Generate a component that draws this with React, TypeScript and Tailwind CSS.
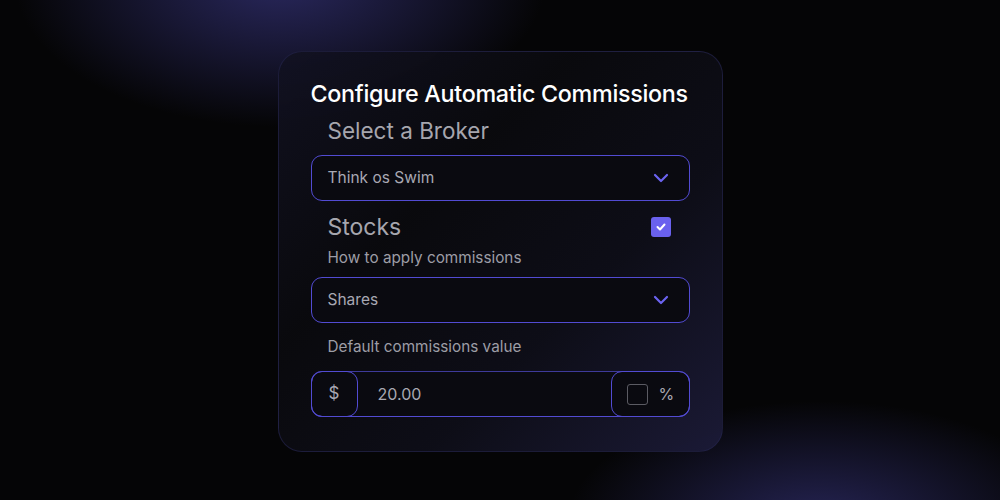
import { useState } from 'react'

function Chevron() {
  return (
    <svg width="16" height="10" viewBox="0 0 16 10" fill="none" className="text-[#6b63f0]">
      <path d="M2 2l6 6 6-6" stroke="currentColor" strokeWidth="2.2" strokeLinecap="round" strokeLinejoin="round" />
    </svg>
  )
}

function SelectBox({ value }: { value: string }) {
  return (
    <div className="flex h-[46px] items-center justify-between rounded-[11px] border border-[#524bd2] bg-[#0a0a10] pl-[16px] pr-[20px]">
      <span className="text-[15.5px] text-[#a8a8b3]">{value}</span>
      <Chevron />
    </div>
  )
}

export default function App() {
  const [stocks, setStocks] = useState(true)
  const [percent, setPercent] = useState(false)

  return (
    <div
      className="flex h-[500px] w-[1000px] items-start justify-center overflow-hidden bg-[#050506] pt-[51px]"
      style={{
        fontFamily: 'Inter, "Noto Sans", sans-serif',
        backgroundImage:
          'radial-gradient(ellipse 380px 210px at 280px -20px, rgba(50,48,115,0.8), transparent 70%), radial-gradient(ellipse 360px 170px at 820px 520px, rgba(50,48,115,0.7), transparent 70%)',
      }}
    >
      <div
        className="flex h-[401px] w-[445px] flex-col rounded-[24px] border border-[#24234a]/70 px-[32px] pt-[26px]"
        style={{
          backgroundImage:
            'linear-gradient(135deg, rgba(18,18,34,0.9) 0%, rgba(10,10,14,0.95) 35%, rgba(14,14,24,0.95) 65%, rgba(28,27,56,0.95) 100%)',
        }}
      >
        <h1 className="whitespace-nowrap text-[23.3px] font-medium leading-[32px] tracking-[-0.3px] text-white">
          Configure Automatic Commissions
        </h1>
        <div className="mt-[7px] pl-[17px] text-[22.5px] leading-[28px] text-[#a6a6ae]">Select a Broker</div>

        <div className="mt-[10px]">
          <SelectBox value="Think os Swim" />
        </div>

        <div className="mt-[12px] flex items-center justify-between pl-[17px] pr-[19px]">
          <span className="text-[23px] leading-[28px] text-[#a6a6ae]">Stocks</span>
          <button
            onClick={() => setStocks(!stocks)}
            className={[
              'flex h-[20px] w-[20px] items-center justify-center rounded-[3px]',
              stocks ? 'bg-[#6a61ee]' : 'border border-[#55555f]',
            ].join(' ')}
          >
            {stocks && (
              <svg width="10" height="8" viewBox="0 0 10 8" fill="none">
                <path d="M1.5 4l2.5 2.5 4.5-5" stroke="white" strokeWidth="2" strokeLinecap="round" strokeLinejoin="round" />
              </svg>
            )}
          </button>
        </div>

        <div className="mt-[6px] pl-[17px] text-[15.3px] leading-[22px] text-[#9d9da6]">How to apply commissions</div>

        <div className="mt-[8px]">
          <SelectBox value="Shares" />
        </div>

        <div className="mt-[13px] pl-[17px] text-[15.3px] leading-[22px] text-[#9d9da6]">Default commissions value</div>

        <div className="mt-[13px] flex h-[46px] items-stretch rounded-[11px] border border-[#524bd2] border-t-[#3e3a9a] bg-[#0a0a10]">
          <div className="-m-px flex w-[47px] items-center justify-center rounded-[11px] border border-[#524bd2] text-[17px] text-[#a8a8b3]">
            $
          </div>
          <div className="flex flex-1 items-center pl-[21px] text-[16px] text-[#a8a8b3]">20.00</div>
          <div className="-m-px flex w-[79px] items-center gap-[11px] rounded-[11px] border border-[#524bd2] pl-[15px]">
            <button
              onClick={() => setPercent(!percent)}
              className={[
                'h-[21px] w-[21px] rounded-[3px] border',
                percent ? 'border-[#6a61ee] bg-[#6a61ee]' : 'border-[#5b5b63]',
              ].join(' ')}
            />
            <span className="text-[16px] text-[#a8a8b3]">%</span>
          </div>
        </div>
      </div>
    </div>
  )
}
